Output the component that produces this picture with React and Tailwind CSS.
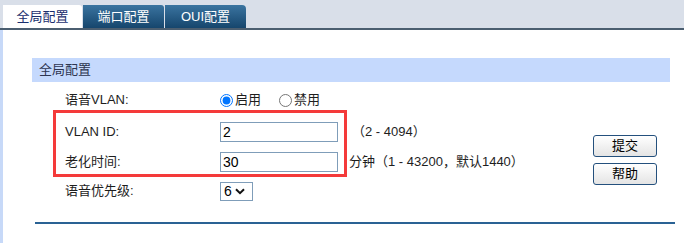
import React from "react";

function Chevron() {
  return (
    <svg width="10" height="7" viewBox="0 0 10 7" className="block">
      <path d="M1 1.2 L5 5.2 L9 1.2" fill="none" stroke="#111" strokeWidth="2" />
    </svg>
  );
}

function Btn({ children }) {
  return (
    <div className="w-[64px] h-[22px] rounded-[3px] border border-[#24507d] bg-gradient-to-b from-[#ffffff] to-[#e4e4e4] flex items-center justify-center text-[13px] text-black">
      {children}
    </div>
  );
}

export default function App() {
  return (
    <div className="w-[684px] h-[243px] bg-white overflow-hidden relative font-['Liberation_Sans','Noto_Sans_CJK_SC',sans-serif] text-[13px] text-[#1e1e1e]">
      <div className="h-[30px] bg-[#d9dfe9] border-b-2 border-[#4b5e70] flex items-end pl-[3px] gap-[1px]">
        <div className="w-[79px] h-[23px] bg-white rounded-tr-[3px] flex items-center justify-center text-[#1a2f6e]">全局配置</div>
        <div className="w-[81px] h-[23px] bg-gradient-to-b from-[#3a74a0] to-[#16466d] rounded-tr-[3px] flex items-center justify-center text-white">端口配置</div>
        <div className="w-[81px] h-[23px] bg-gradient-to-b from-[#3a74a0] to-[#16466d] rounded-tr-[4px] flex items-center justify-center text-white">OUI配置</div>
      </div>
      <div className="flex h-[213px]">
        <div className="w-[3px] bg-[#c7d9f8]" />
        <div className="flex-1 pl-[29px] pt-[28px]">
          <div className="h-[24px] w-[638px] bg-[#c5d9fd] pl-[7px] flex items-center text-[#2d3550]">全局配置</div>
          <div className="flex w-[638px] mt-[6px]">
            <div className="w-[561px] pl-[33px] flex flex-col">
              <div className="h-[24px] flex items-center">
                <div className="w-[155px]">语音VLAN:</div>
                <label className="flex items-center">
                  <input type="radio" name="v" defaultChecked className="m-0 w-[13px] h-[13px]" />
                  <span className="ml-[2px]">启用</span>
                </label>
                <label className="flex items-center ml-[18px]">
                  <input type="radio" name="v" className="m-0 w-[13px] h-[13px]" />
                  <span className="ml-[2px]">禁用</span>
                </label>
              </div>
              <div className="h-[24px] flex items-center mt-[8px]">
                <div className="w-[155px]">VLAN ID:</div>
                <div className="w-[118px] h-[20px] border border-[#7f9db9] flex items-center pl-[2px] text-[14px] text-black">2</div>
                <div className="ml-[14px]">（2 - 4094）</div>
              </div>
              <div className="h-[24px] flex items-center mt-[6px]">
                <div className="w-[155px]">老化时间:</div>
                <div className="w-[118px] h-[20px] border border-[#7f9db9] flex items-center pl-[2px] text-[14px] text-black">30</div>
                <div className="ml-[11px]">分钟（1 - 43200，默认1440）</div>
              </div>
              <div className="h-[22px] flex items-center mt-[6px]">
                <div className="w-[155px]">语音优先级:</div>
                <div className="w-[33px] h-[19px] border border-[#7f9db9] flex items-center pl-[3px] gap-[3px] text-[14px] text-black">
                  <span>6</span>
                  <Chevron />
                </div>
              </div>
            </div>
            <div className="w-[64px] pt-[47px] flex flex-col gap-[6px]">
              <Btn>提交</Btn>
              <Btn>帮助</Btn>
            </div>
          </div>
          <div className="ml-[3px] mt-[20px] w-[640px] h-[2px] bg-[#2a6294]" />
        </div>
      </div>
      <div className="absolute left-[53px] top-[110px] w-[294px] h-[67px] border-[3px] border-[#f43a3a]" />
    </div>
  );
}
